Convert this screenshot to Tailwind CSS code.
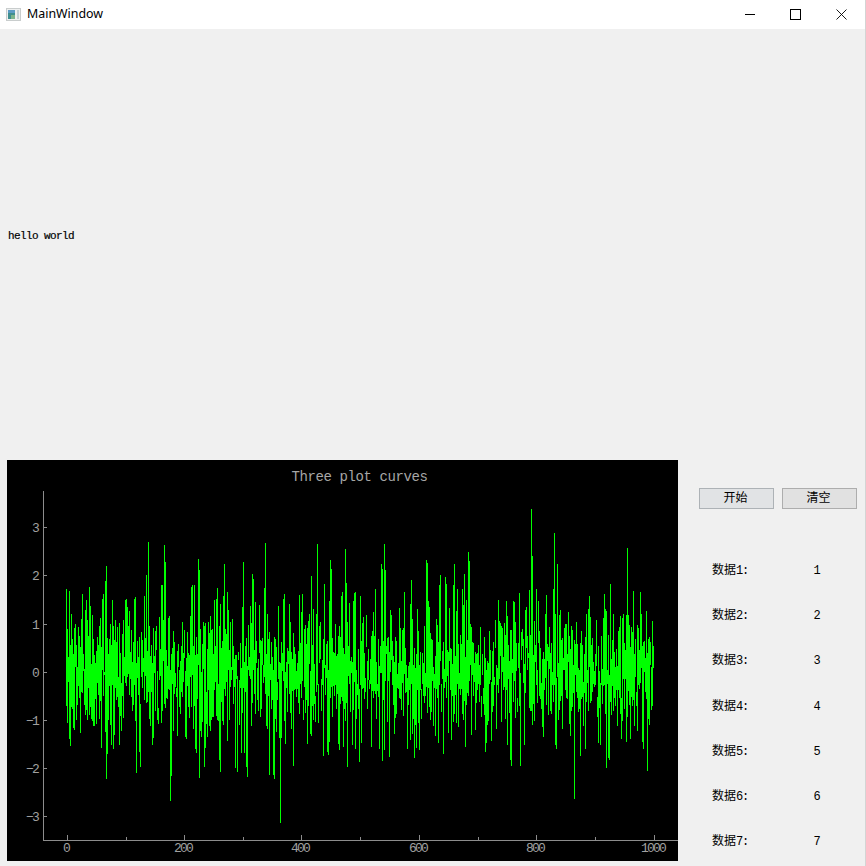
<!DOCTYPE html>
<html>
<head>
<meta charset="utf-8">
<script src="https://cdn.jsdelivr.net/npm/@tailwindcss/browser@4"></script>
<title>MainWindow</title>
</head>
<body class="bg-[#f0f0f0]">
<div class="w-[866px] h-[866px] overflow-hidden bg-[#f0f0f0] border-r border-[#d4d4d4] flex flex-col font-['Liberation_Mono','Noto_Sans_CJK_SC',monospace] text-black">
  <div class="h-[29px] shrink-0 bg-white flex items-center pl-[6px]">
    <svg width="15" height="13" viewBox="0 0 15 13" class="shrink-0">
      <rect x="0" y="0" width="15" height="13" fill="#c9cdcd"/>
      <rect x="1" y="1" width="13" height="11" fill="#eef0f0"/>
      <rect x="2" y="2" width="7" height="9" fill="#3f8f8f"/>
      <rect x="2" y="2" width="7" height="3" fill="#5b9bc4"/>
      <rect x="5" y="7" width="4" height="4" fill="#7cb48c"/>
      <rect x="11" y="2" width="2" height="9" fill="#c4d0d4"/>
    </svg>
    <span class="ml-[6px] font-['Noto_Sans',sans-serif] text-[12.4px] leading-none text-black">MainWindow</span>
    <div class="ml-auto flex items-center pr-[18px]">
      <svg width="11" height="11" viewBox="0 0 11 11"><path d="M0 5.5H10" stroke="#000" stroke-width="1" shape-rendering="crispEdges"/></svg>
      <svg width="11" height="11" viewBox="0 0 11 11" class="ml-[34px]"><rect x="0.5" y="0.5" width="10" height="10" fill="none" stroke="#000" stroke-width="1" shape-rendering="crispEdges"/></svg>
      <svg width="11" height="11" viewBox="0 0 11 11" class="ml-[35px]"><path d="M0.5 0.5L10.5 10.5M10.5 0.5L0.5 10.5" stroke="#000" stroke-width="0.9" fill="none"/></svg>
    </div>
  </div>

  <div class="h-[412px] shrink-0 flex items-center pl-[8px] pt-[2px]">
    <span class="text-[11px] tracking-[-0.6px] leading-none [-webkit-text-stroke:0.2px_black]">hello world</span>
  </div>

  <div class="mt-[19px] flex pl-[7px]">
    <div class="w-[671px] h-[401px] shrink-0 bg-black">
      <svg width="671" height="401" viewBox="7 460 671 401" class="block font-['Liberation_Mono',monospace]">
        <path id="curve" fill="none" stroke="#00ff00" stroke-width="1" shape-rendering="crispEdges"/>
        <g stroke="#8c8c8c" stroke-width="1" shape-rendering="crispEdges" fill="none">
          <path d="M43.5 491V840.5H678"/>
          <path d="M43 527.5H47M43 575.5H47M43 624.5H47M43 672.5H47M43 720.5H47M43 768.5H47M43 816.5H47"/>
          <path d="M67.5 835V840M184.5 835V840M301.5 835V840M419.5 835V840M536.5 835V840M654.5 835V840"/>
          <path d="M126.5 837V840M243.5 837V840M360.5 837V840M478.5 837V840M595.5 837V840"/>
        </g>
        <text x="359.5" y="481" text-anchor="middle" class="fill-[#a6a6a6] text-[14px] tracking-[-0.4px]">Three plot curves</text>
        <g class="fill-[#a0a0a0] text-[13px] tracking-[-1.8px]" text-anchor="end">
          <text x="38" y="532">3</text>
          <text x="38" y="580">2</text>
          <text x="38" y="629">1</text>
          <text x="38" y="677">0</text>
          <text x="38" y="725">−1</text>
          <text x="38" y="773">−2</text>
          <text x="38" y="821">−3</text>
        </g>
        <g class="fill-[#a0a0a0] text-[13px] tracking-[-1.8px]" text-anchor="middle">
          <text x="66" y="851.5">0</text>
          <text x="183" y="851.5">200</text>
          <text x="300" y="851.5">400</text>
          <text x="418" y="851.5">600</text>
          <text x="535" y="851.5">800</text>
          <text x="653" y="851.5">1000</text>
        </g>
      </svg>
    </div>

    <div class="ml-[21px] w-[158px] shrink-0">
      <div class="mt-[28px] flex gap-[8px]">
        <button class="w-[75px] h-[21px] pr-[2px] bg-[#e1e3e5] border border-[#adb2b6] text-[12px] leading-none flex items-center justify-center">开始</button>
        <button class="w-[75px] h-[21px] pr-[2px] bg-[#e1e1e1] border border-[#adadad] text-[12px] leading-none flex items-center justify-center">清空</button>
      </div>
      <div class="mt-[39px] ml-[13px] grid grid-cols-[75px_60px] auto-rows-[45.3px] items-center">
        <div class="text-[12px] leading-none">数据<span class="tracking-[-1.2px]">1:</span></div><div class="text-center text-[12px] leading-none">1</div>
        <div class="text-[12px] leading-none">数据<span class="tracking-[-1.2px]">2:</span></div><div class="text-center text-[12px] leading-none">2</div>
        <div class="text-[12px] leading-none">数据<span class="tracking-[-1.2px]">3:</span></div><div class="text-center text-[12px] leading-none">3</div>
        <div class="text-[12px] leading-none">数据<span class="tracking-[-1.2px]">4:</span></div><div class="text-center text-[12px] leading-none">4</div>
        <div class="text-[12px] leading-none">数据<span class="tracking-[-1.2px]">5:</span></div><div class="text-center text-[12px] leading-none">5</div>
        <div class="text-[12px] leading-none">数据<span class="tracking-[-1.2px]">6:</span></div><div class="text-center text-[12px] leading-none">6</div>
        <div class="text-[12px] leading-none">数据<span class="tracking-[-1.2px]">7:</span></div><div class="text-center text-[12px] leading-none">7</div>
      </div>
    </div>
  </div>
</div>
<script>
var tops="66,589,69,591,71,614,74,628,79,636,81,619,82,594,85,610,86,600,87,620,89,587,90,606,92,615,97,637,99,626,102,599,103,594,105,581,106,566,110,624,112,600,113,626,123,620,125,600,126,599,127,607,129,611,131,630,134,599,135,597,137,641,141,632,144,596,146,575,148,542,149,626,153,628,159,617,161,585,162,585,163,620,164,545,165,562,168,618,169,616,173,631,182,622,184,630,187,632,190,616,191,587,192,585,194,585,198,559,199,570,209,633,210,616,214,600,216,599,217,588,219,626,220,604,223,596,224,564,225,629,226,634,227,592,228,610,242,607,243,562,250,606,252,574,253,579,255,602,259,605,264,588,265,543,267,614,278,606,283,599,284,594,289,604,299,595,301,612,302,594,308,621,309,614,311,576,313,609,316,614,317,544,319,626,320,622,324,584,329,601,330,560,331,569,341,596,342,592,345,549,346,583,349,603,353,601,354,593,355,592,360,596,363,617,366,615,373,612,375,589,381,564,382,569,384,544,385,570,390,610,391,615,399,608,404,592,410,604,411,580,417,609,426,560,427,563,428,601,429,607,439,585,440,575,445,577,446,584,449,608,453,585,454,564,456,611,457,589,462,589,463,605,464,574,466,600,468,552,469,561,498,600,499,621,506,601,507,616,513,601,514,602,515,622,519,593,525,610,526,607,529,590,531,509,532,556,536,589,538,601,545,614,546,595,549,627,553,589,554,533,555,614,557,564,559,615,560,610,566,624,568,612,572,630,576,622,586,614,588,609,589,596,590,617,596,620,604,594,605,609,606,611,610,584,613,614,620,616,622,618,623,614,626,615,627,548,628,615,631,627,633,591,638,628,640,592,641,614,646,611,650,642,652,621".split(",").map(Number);
var bots="67,723,69,739,70,746,73,728,74,730,76,720,80,733,85,715,92,721,93,726,99,719,101,748,105,732,106,779,107,754,111,745,113,749,114,735,119,745,121,731,123,718,132,711,135,721,136,773,139,752,140,767,146,703,149,719,152,745,153,738,157,720,165,708,170,801,171,776,173,731,177,736,185,737,186,739,189,718,193,729,195,749,196,753,199,778,200,731,201,737,204,767,205,748,207,737,210,731,212,717,219,760,220,772,222,721,227,741,229,720,235,768,237,772,241,753,244,753,246,767,247,777,251,726,255,714,261,709,267,729,269,775,273,775,274,779,276,732,279,738,280,823,281,738,285,744,287,712,291,729,293,766,305,713,307,744,310,734,311,736,318,723,323,756,327,752,328,755,329,742,338,744,339,750,343,747,347,767,352,745,355,749,359,762,361,743,367,709,371,747,376,719,379,749,382,761,384,750,389,757,394,734,403,716,407,749,410,740,412,734,414,758,416,748,419,750,424,703,430,720,433,726,435,736,438,743,443,754,448,733,451,740,458,727,463,720,465,747,471,735,475,730,484,715,485,752,486,743,491,741,493,706,496,729,501,722,507,745,510,760,511,766,515,718,520,766,524,745,530,711,532,725,534,721,537,703,542,727,543,737,548,715,551,714,555,745,556,749,562,729,567,699,570,736,574,799,580,756,583,726,585,749,588,711,591,701,598,743,600,745,602,704,606,768,608,758,609,760,611,715,617,726,621,739,626,742,630,739,634,726,637,731,642,742,643,749,647,771,649,725,651,710".split(",").map(Number);
var t={},b={},i;
for(i=0;i<tops.length;i+=2)t[tops[i]]=tops[i+1];
for(i=0;i<bots.length;i+=2)b[bots[i]]=bots[i+1];
var s=20240611;
function r(lo,hi){s=(s*1103515245+12345)%2147483648;return lo+Math.floor((s/2147483648)*(hi-lo+1));}
function gauss(){return (r(0,1000)+r(0,1000)+r(0,1000)-1500)/1500*75;}
var d="";
for(var x=66;x<=653;x++){
  /* each column joins about three noise samples, as the plotted series does */
  var p=672+gauss(),q=672+gauss(),u=672+gauss();
  var a=Math.round(Math.min(p,q,u)), c=Math.round(Math.max(p,q,u));
  if(a<618)a=618+r(0,14);
  if(c>726)c=726-r(0,14);
  if(t[x])a=t[x];
  if(b[x])c=b[x];
  d+="M"+(x+.5)+" "+a+"V"+c;
}
document.getElementById("curve").setAttribute("d",d);
</script>
</body>
</html>
